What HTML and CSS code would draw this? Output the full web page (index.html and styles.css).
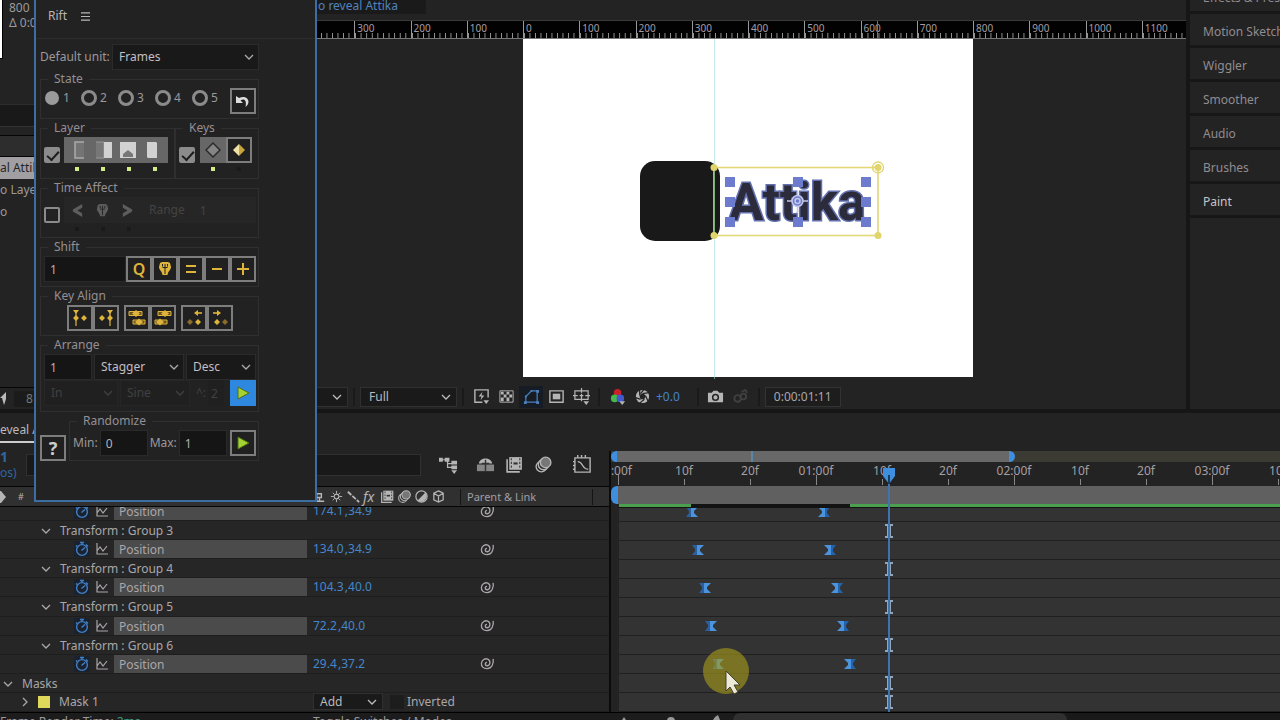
FILE: index.html
```html
<!DOCTYPE html>
<html lang="en">
<head>
<meta charset="UTF-8">
<meta name="viewport" content="width=device-width, initial-scale=1.0">
<title>Logo reveal Attika</title>
<link rel="stylesheet" href="styles.css">
</head>
<body>

<!-- Shared icons -->
<svg class="sprite" aria-hidden="true">
  <symbol id="i-chevron" viewBox="0 0 12 12"><path d="M2 4l4 4 4-4" fill="none" stroke="currentColor" stroke-width="1.3"/></symbol>
  <symbol id="i-right" viewBox="0 0 12 12"><path d="M4 2l4 4-4 4" fill="none" stroke="currentColor" stroke-width="1.3"/></symbol>
  <symbol id="i-watch" viewBox="0 0 16 16"><g fill="none" stroke="currentColor" stroke-width="1.4"><circle cx="8" cy="9" r="5.4"/><path d="M6 1.5h4M8 1.5v2M12 3.5l2 2M3.2 4.4L2 5.6M7.5 9.5L11 6.4"/></g></symbol>
  <symbol id="i-graph" viewBox="0 0 16 16"><path d="M3 2v11h11M3 10l3-4 3 4 4-5" fill="none" stroke="currentColor" stroke-width="1.2"/></symbol>
  <symbol id="i-whip" viewBox="0 0 16 16"><path d="M14 3c1 5-1.500 10.500-6.500 10.500C3.500 13.500 1.200 11 1.500 7.800 1.900 4 5.500 2.200 8.300 3.300c3.200 1.400 3 6.700-.5 7.100C5 10.500 4.800 7 7.500 6.800" fill="none" stroke="currentColor" stroke-width="1.400"/></symbol>
  <symbol id="i-play" viewBox="0 0 16 16"><path d="M3 2v12L14 8z" fill="#a4d233" stroke="#4c6d1a"/></symbol>
  <symbol id="i-shield" viewBox="0 0 16 16"><path d="M3 2l2-1h6l2 1 1 4c0 3-3 4-3.500 8h-5C5 10 2 9 2 6z" fill="currentColor"/><path d="M5.500 3v2.500M8 3v3M10.500 3v2.500M5.500 6.500h5M8 6.500V13" stroke="#222" stroke-width="1" fill="none"/></symbol>
  <symbol id="i-film" viewBox="0 0 18 18"><path d="M4 2h12v12H4z" fill="currentColor"/><path d="M2 4v12h12" fill="none" stroke="currentColor" stroke-width="1.500"/><path d="M6 3v10M14 3v10" stroke="#333" stroke-dasharray="2 1.500" stroke-width="1"/><path d="M8 8h4" stroke="#333" stroke-width="2"/></symbol>
  <symbol id="i-blur" viewBox="0 0 18 18"><g stroke="currentColor" stroke-width="1.300"><circle cx="7" cy="11" r="5" fill="none"/><circle cx="9" cy="9" r="5" fill="#333"/><circle cx="11" cy="7" r="5" fill="#777"/></g></symbol>
  <symbol id="i-key" viewBox="0 0 12 10"><path d="M0 0h6v10H0l3-4V4z" fill="#2b5f9c"/><path d="M5 0h7L8 4v2l4 4H5z" fill="#4b93dc"/></symbol>
  <symbol id="i-keyout" viewBox="0 0 12 10"><path d="M6 0h6L9 4v2l3 4H6z" fill="#2363ab"/><path d="M0 0h7v10H0l4-4V4z" fill="#4b93dc"/></symbol>
  <symbol id="i-beam" viewBox="0 0 8 14"><path d="M0 0h8v2H6v10h2v2H0v-2h2V2H0z" fill="#91a5bd"/></symbol>
</svg>

<main class="workspace">
  <section class="top">

    <!-- Project panel -->
    <aside class="project panel">
      <div class="project-info">
        <div class="thumb"></div>
        <p>800<br>Δ 0:0</p>
      </div>
      <div class="project-search"></div>
      <div class="project-head"></div>
      <ul class="project-list">
        <li class="selected">al Attika</li>
        <li>o Layers</li>
        <li>o</li>
      </ul>
      <div class="project-foot">
        <svg class="rocket" viewBox="0 0 6 14"><path d="M6 0L0 6h2l2 7 2-6z" fill="currentColor"/></svg>
        <span class="bpc">8</span>
      </div>
    </aside>

    <!-- Composition viewer -->
    <section class="viewer panel">
      <div class="viewer-tabs"><a href="#comp">o reveal Attika</a></div>
      <div class="ruler">
        <div class="ruler-track">
          <span></span><span>300</span><span>200</span><span>100</span><span>0</span><span>100</span><span>200</span><span>300</span><span>400</span><span>500</span><span>600</span><span>700</span><span>800</span><span>900</span><span>1000</span><span>1100</span>
        </div>
        <i class="ruler-mark"></i>
      </div>
      <div class="stage" id="comp">
        <svg class="canvas" viewBox="0 0 450 340" role="img" aria-label="Attika logo">
          <rect width="450" height="338" fill="#fff"/>
          <rect x="117" y="122" width="80" height="80" rx="15" fill="#191919"/>
          <path d="M191.500 0v340" stroke="#9fe0da" stroke-opacity=".6"/>
          <text x="206" y="181" class="logo-text">Attika</text>
          <rect x="191" y="128.500" width="164" height="68" fill="none" stroke="#e3d877" stroke-width="1.600"/>
          <path d="M191.500 132v61" stroke="#7fae72"/>
          <g fill="#e0d56c"><circle cx="191" cy="128.500" r="3.500"/><circle cx="191" cy="196.500" r="3.500"/><circle cx="355" cy="196.500" r="3.500"/><circle cx="355" cy="128.500" r="3.500"/></g>
          <circle cx="355" cy="128.500" r="5.500" fill="none" stroke="#e0d56c" stroke-width="1.300"/>
          <path d="M202 138h10v10h-10zM270 138h10v10h-10zM338 138h10v10h-10zM202 158h10v10h-10zM338 158h10v10h-10zM202 178h10v10h-10zM270 178h10v10h-10zM338 178h10v10h-10z" fill="#6c7bce"/>
          <g fill="none" stroke="#c3c8ea" stroke-width="1.500"><circle cx="274.500" cy="162" r="5.500" fill="#6c7bce"/><circle cx="274.500" cy="162" r="2.500"/><path d="M264 162h5M280 162h5M274.500 152v5M274.500 168v5"/></g>
        </svg>
      </div>
      <div class="viewer-bar">
        <button class="combo combo-mag" aria-label="Magnification"><svg class="ico-s"><use href="#i-chevron"/></svg></button>
        <i class="sep"></i>
        <button class="combo combo-res">Full <svg class="ico-s"><use href="#i-chevron"/></svg></button>
        <i class="sep"></i>
        <div class="view-icons">
          <button aria-label="Fast previews"><svg viewBox="0 0 18 18"><path d="M10 15H2V2h14v8" fill="none" stroke="currentColor" stroke-width="1.500"/><path d="M10 4L6 9h3l-1 4 4-5H9z" fill="currentColor"/><path d="M11 13h6l-3 4z" fill="currentColor"/></svg></button>
          <button aria-label="Transparency grid"><svg viewBox="0 0 18 18"><path d="M2 3h14v12H2z" fill="none" stroke="currentColor"/><path d="M3 4h3v3H3zM9 4h3v3H9zM6 7h3v3H6zM12 7h3v3h-3zM3 10h3v4H3zM9 10h3v4H9z" fill="currentColor"/></svg></button>
          <button class="on" aria-label="Mask visibility"><svg viewBox="0 0 18 18"><path d="M3 15V9l6-6h6v12z" fill="none" stroke="currentColor" stroke-width="1.300"/><path d="M1 14h3v3H1zM14 14h3v3h-3zM14 2h3v3h-3zM2 8h2v2H2zM8 2h2v2H8z" fill="currentColor"/></svg></button>
          <button aria-label="Region of interest"><svg viewBox="0 0 18 18"><path d="M2 3h14v12H2z" fill="none" stroke="currentColor" stroke-width="1.500"/><path d="M5 6h8v6H5z" fill="currentColor"/></svg></button>
          <button aria-label="Grid and guides"><svg viewBox="0 0 18 18"><path d="M2 3h14v9H2zM9 0v5M9 10v4M0 8h5M13 8h5M7 8h4M9 6v4" fill="none" stroke="currentColor" stroke-width="1.300"/><path d="M11 14h6l-3 4z" fill="currentColor"/></svg></button>
        </div>
        <i class="sep"></i>
        <div class="view-icons">
          <button aria-label="Channels"><svg viewBox="0 0 18 18"><circle cx="9" cy="5" r="4" fill="#c8202a"/><circle cx="6" cy="11" r="4" fill="#45b84d"/><circle cx="12" cy="11" r="4" fill="#4557cc"/><path d="M11 14h6l-3 4z" fill="currentColor"/></svg></button>
          <button aria-label="Exposure"><svg viewBox="0 0 18 18"><circle cx="9" cy="9" r="7" fill="currentColor"/><path d="M9 6l7-1M12 8l3 6M11 12l-5 4M7 12l-6-2M6 8l0-6M7 6l4-5" stroke="#232323" stroke-width="1.300"/><circle cx="9" cy="9" r="3" fill="#232323"/></svg></button>
        </div>
        <span class="exposure">+0.0</span>
        <i class="sep"></i>
        <div class="view-icons">
          <button aria-label="Snapshot"><svg viewBox="0 0 18 18"><path d="M1 5h4l2-2h4l2 2h4v10H1z" fill="currentColor"/><circle cx="9" cy="10" r="3" fill="none" stroke="#232323" stroke-width="1.600"/></svg></button>
          <button class="off" aria-label="Show snapshot"><svg viewBox="0 0 18 18"><g fill="none" stroke="currentColor" stroke-width="2"><circle cx="6" cy="11" r="3.500"/><circle cx="12" cy="9" r="3"/><path d="M10 4l4-2 2 3"/></g></svg></button>
        </div>
        <i class="sep"></i>
        <button class="timecode">0:00:01:11</button>
      </div>
    </section>

    <!-- Collapsed side panels -->
    <nav class="side">
      <a href="#fx">Effects &amp; Presets</a>
      <a href="#sketch">Motion Sketch</a>
      <a href="#wiggler">Wiggler</a>
      <a href="#smoother">Smoother</a>
      <a href="#audio">Audio</a>
      <a href="#brushes">Brushes</a>
      <a href="#paint" class="current">Paint</a>
    </nav>
  </section>

  <!-- Timeline -->
  <section class="timeline panel">
    <div class="tl-tabs"><a href="#timeline">eveal Attika</a></div>
    <div class="tl-main" id="timeline">
      <div class="tl-left">
        <div class="tl-tools">
          <div class="now"><b>1</b><span>os)</span></div>
          <input class="tl-search" type="text" aria-label="Search layers">
          <div class="tl-icons">
            <button aria-label="Mini flowchart"><svg viewBox="0 0 20 20"><path d="M1 5h8M9 5v8h5M9 9h5" fill="none" stroke="currentColor" stroke-width="1.300"/><path d="M0 3h4v4H0zM6 3h5v4H6zM13 6h6v4h-6zM13 11h6v4h-6zM13 16h6l-3 4z" fill="currentColor"/></svg></button>
            <button aria-label="Shy"><svg viewBox="0 0 20 20"><path d="M1 10h18v7H1z" fill="#858585"/><path d="M3 9c1-7 13-7 14 0z" fill="currentColor"/><path d="M10 5v12M6 9h8" stroke="#333" stroke-width="1.500"/></svg></button>
            <button aria-label="Frame blending"><svg><use href="#i-film"/></svg></button>
            <button aria-label="Motion blur"><svg><use href="#i-blur"/></svg></button>
            <button class="gap" aria-label="Graph editor"><svg viewBox="0 0 20 20"><path d="M2 3h16v15H2zM5 0v3M9 0v3M13 0v3M0 7h2M0 11h2M0 15h2M5 7c6 0 4 8 11 8" fill="none" stroke="currentColor" stroke-width="1.500"/></svg></button>
          </div>
        </div>
        <div class="tl-head">
          <svg class="tag" viewBox="0 0 12 12"><path d="M0 0h1l5 6-5 6H0z" fill="currentColor"/></svg>
          <span class="hash">#</span>
          <div class="switches">
            <svg viewBox="0 0 16 16"><path d="M3 13h10M5 13V5h5v4H5M8 9v4" fill="none" stroke="currentColor" stroke-width="1.500"/></svg>
            <svg viewBox="0 0 16 16"><circle cx="8" cy="8" r="2.500" fill="none" stroke="currentColor" stroke-width="1.200"/><path d="M8 2v3M8 11v3M2 8h3M11 8h3M4 4l2 2M10 10l2 2M12 4l-2 2M6 10l-2 2" stroke="currentColor"/></svg>
            <svg viewBox="0 0 16 16"><path d="M2 3l12 11" stroke="currentColor" stroke-width="2" stroke-dasharray="5 1.500"/></svg>
            <em>fx</em>
            <svg><use href="#i-film"/></svg>
            <svg><use href="#i-blur"/></svg>
            <svg viewBox="0 0 16 16"><circle cx="8" cy="8" r="6" fill="none" stroke="currentColor" stroke-width="1.300"/><path d="M12.200 3.800A6 6 0 0 1 3.800 12.200z" fill="currentColor"/></svg>
            <svg viewBox="0 0 16 16"><path d="M8 2l5 2.500v7L8 14l-5-2.500v-7zM3 4.500L8 7.500l5-3M8 7.500V14" fill="none" stroke="currentColor" stroke-width="1.300"/></svg>
          </div>
          <span class="parent">Parent &amp; Link</span>
        </div>
        <div class="clip">
          <div class="rows props">
            <div class="row prop"><svg class="watch"><use href="#i-watch"/></svg><svg class="graph"><use href="#i-graph"/></svg><span class="name">Position</span><a href="#v" class="value">174.1&hairsp;,34.9</a><svg class="whip"><use href="#i-whip"/></svg></div>
            <div class="row group"><svg class="ico-s"><use href="#i-chevron"/></svg><span>Transform : Group 3</span></div>
            <div class="row prop"><svg class="watch"><use href="#i-watch"/></svg><svg class="graph"><use href="#i-graph"/></svg><span class="name">Position</span><a href="#v" class="value">134.0&hairsp;,34.9</a><svg class="whip"><use href="#i-whip"/></svg></div>
            <div class="row group"><svg class="ico-s"><use href="#i-chevron"/></svg><span>Transform : Group 4</span></div>
            <div class="row prop"><svg class="watch"><use href="#i-watch"/></svg><svg class="graph"><use href="#i-graph"/></svg><span class="name">Position</span><a href="#v" class="value">104.3&hairsp;,40.0</a><svg class="whip"><use href="#i-whip"/></svg></div>
            <div class="row group"><svg class="ico-s"><use href="#i-chevron"/></svg><span>Transform : Group 5</span></div>
            <div class="row prop"><svg class="watch"><use href="#i-watch"/></svg><svg class="graph"><use href="#i-graph"/></svg><span class="name">Position</span><a href="#v" class="value">72.2&hairsp;,40.0</a><svg class="whip"><use href="#i-whip"/></svg></div>
            <div class="row group"><svg class="ico-s"><use href="#i-chevron"/></svg><span>Transform : Group 6</span></div>
            <div class="row prop"><svg class="watch"><use href="#i-watch"/></svg><svg class="graph"><use href="#i-graph"/></svg><span class="name">Position</span><a href="#v" class="value">29.4&hairsp;,37.2</a><svg class="whip"><use href="#i-whip"/></svg></div>
            <div class="row masks"><svg class="ico-s"><use href="#i-chevron"/></svg><span>Masks</span></div>
            <div class="row mask">
              <svg class="ico-s"><use href="#i-right"/></svg><i class="swatch"></i><span class="mask-name">Mask 1</span>
              <button class="combo combo-mode">Add <svg class="ico-s"><use href="#i-chevron"/></svg></button>
              <label class="inverted"><input type="checkbox"> Inverted</label>
            </div>
          </div>
        </div>
      </div>

      <div class="tl-right">
        <div class="navigator"><i class="nav-range"></i></div>
        <div class="time-ruler">
          <span class="sec">0:00f</span><span>10f</span><span>20f</span><span class="sec">01:00f</span><span>10f</span><span>20f</span><span class="sec">02:00f</span><span>10f</span><span>20f</span><span class="sec">03:00f</span><span>10f</span>
        </div>
        <div class="work-area"></div>
        <div class="cache"><i></i><i></i></div>
        <div class="clip">
          <div class="rows tracks">
            <div class="row"><svg class="kf" style="--f:11"><use href="#i-key"/></svg><svg class="kf" style="--f:31"><use href="#i-keyout"/></svg></div>
            <div class="row"><svg class="beam" style="--f:41"><use href="#i-beam"/></svg></div>
            <div class="row"><svg class="kf" style="--f:12"><use href="#i-key"/></svg><svg class="kf" style="--f:32"><use href="#i-keyout"/></svg></div>
            <div class="row"><svg class="beam" style="--f:41"><use href="#i-beam"/></svg></div>
            <div class="row"><svg class="kf" style="--f:13"><use href="#i-key"/></svg><svg class="kf" style="--f:33"><use href="#i-keyout"/></svg></div>
            <div class="row"><svg class="beam" style="--f:41"><use href="#i-beam"/></svg></div>
            <div class="row"><svg class="kf" style="--f:14"><use href="#i-key"/></svg><svg class="kf" style="--f:34"><use href="#i-keyout"/></svg></div>
            <div class="row"><svg class="beam" style="--f:41"><use href="#i-beam"/></svg></div>
            <div class="row"><svg class="kf" style="--f:15"><use href="#i-key"/></svg><svg class="kf" style="--f:35"><use href="#i-keyout"/></svg></div>
            <div class="row"><svg class="beam" style="--f:41"><use href="#i-beam"/></svg></div>
            <div class="row"><svg class="beam" style="--f:41"><use href="#i-beam"/></svg></div>
          </div>
        </div>
        <div class="playhead" style="--f:41"><svg viewBox="0 0 12 16"><path d="M0 0h12v8l-6 8-6-8z" fill="#3e8fe0"/><path d="M6 7v9" stroke="#123" stroke-width="1.500"/></svg></div>
      </div>
    </div>
    <footer class="tl-foot">
      <span class="render">Frame Render Time: <b>2ms</b></span>
      <button class="toggle">Toggle Switches / Modes</button>
      <div class="zoomer"><svg viewBox="0 0 120 8"><path d="M11 7l2-3 2 3zM102 7l2-3 3-2 2 5z" fill="#999"/><circle cx="60" cy="8" r="4" fill="#999"/></svg></div>
      <div class="scroller"><i></i></div>
    </footer>
  </section>
</main>

<!-- Floating Rift window -->
<section class="rift">
  <header class="rift-title"><h3>Rift</h3><button aria-label="Panel menu"><svg viewBox="0 0 10 10"><path d="M0 1h10M0 5h10M0 9h10" stroke="currentColor" stroke-width="1.300"/></svg></button></header>
  <form class="rift-body">
    <div class="unit">
      <label for="unit">Default unit:</label>
      <span class="select"><select id="unit"><option>Frames</option></select><svg class="ico-s"><use href="#i-chevron"/></svg></span>
    </div>

    <fieldset>
      <legend>State</legend>
      <div class="line state">
        <label><input type="radio" name="state" checked>1</label>
        <label><input type="radio" name="state">2</label>
        <label><input type="radio" name="state">3</label>
        <label><input type="radio" name="state">4</label>
        <label><input type="radio" name="state">5</label>
        <button type="button" class="btn end" aria-label="Reset"><svg viewBox="0 0 16 16"><path d="M1 3v7h7L5.500 7.500C9 5 12 7 10.500 14 17 9 12 1 4 5z" fill="#ddd"/></svg></button>
      </div>
    </fieldset>

    <div class="pair">
      <fieldset class="layer">
        <legend>Layer</legend>
        <div class="line top-line">
          <input type="checkbox" aria-label="Layer" checked>
          <div class="stack">
            <div class="strip">
              <svg viewBox="0 0 18 18"><path d="M14 1H5v16h9" fill="#747474" stroke="#aaa" stroke-width="1.500"/></svg>
              <svg viewBox="0 0 18 18"><path d="M1 1h8v16H1" fill="#777" stroke="#999"/><path d="M9 1h8v16H9z" fill="#d2d2d2"/></svg>
              <svg viewBox="0 0 18 18"><path d="M1 1h16v16H1z" fill="#d2d2d2"/><path d="M4 16v-3l5-4 5 4v3z" fill="#777"/></svg>
              <svg viewBox="0 0 18 18"><path d="M3 1h9l1 1v15H4l-1-1z" fill="#d2d2d2"/></svg>
            </div>
            <div class="dots"><i></i><i></i><i></i><i></i></div>
          </div>
        </div>
      </fieldset>
      <fieldset class="keys">
        <legend>Keys</legend>
        <div class="line top-line">
          <input type="checkbox" aria-label="Keys" checked>
          <div class="stack">
            <div class="line">
              <button type="button" class="btn lit" aria-label="All keys"><svg viewBox="0 0 16 16"><path d="M8 1l7 7-7 7-7-7z" fill="#858585" stroke="#2c2c2c" stroke-width="1.500"/></svg></button>
              <button type="button" class="btn" aria-label="Selected keys"><svg viewBox="0 0 16 16"><path d="M8 2v12L2 8z" fill="#efe2a4"/><path d="M8 2l6 6-6 6z" fill="#c9a63c"/></svg></button>
            </div>
            <div class="dots"><i></i><i class="dim"></i></div>
          </div>
        </div>
      </fieldset>
    </div>

    <fieldset class="time">
      <legend>Time Affect</legend>
      <div class="line top-line">
        <input type="checkbox" aria-label="Time Affect">
        <div class="stack wide">
          <div class="range">
            <svg viewBox="0 0 16 16"><path d="M13 1v4L8 8l5 3v4L3 9V7z" fill="currentColor"/></svg>
            <svg><use href="#i-shield"/></svg>
            <svg viewBox="0 0 16 16"><path d="M3 1v4l5 3-5 3v4l10-6V7z" fill="currentColor"/></svg>
            <label for="range">Range</label>
            <input id="range" type="text" value="1" disabled>
          </div>
          <div class="dots"><i class="dim"></i><i class="dim"></i><i class="dim"></i></div>
        </div>
      </div>
    </fieldset>

    <fieldset>
      <legend>Shift</legend>
      <div class="line">
        <input class="grow" type="text" value="1" aria-label="Shift amount">
        <button type="button" class="btn gold">Q</button>
        <button type="button" class="btn gold" aria-label="To playhead"><svg><use href="#i-shield"/></svg></button>
        <button type="button" class="btn gold" aria-label="Equal"><svg viewBox="0 0 16 16"><path d="M3 5h10M3 11h10" stroke="currentColor" stroke-width="2"/></svg></button>
        <button type="button" class="btn gold" aria-label="Minus"><svg viewBox="0 0 16 16"><path d="M3 8h10" stroke="currentColor" stroke-width="2"/></svg></button>
        <button type="button" class="btn gold" aria-label="Plus"><svg viewBox="0 0 16 16"><path d="M2 8h12M8 2v12" stroke="currentColor" stroke-width="2"/></svg></button>
      </div>
    </fieldset>

    <fieldset>
      <legend>Key Align</legend>
      <div class="line align">
        <div class="line">
          <button type="button" class="btn gold" aria-label="Align left"><svg viewBox="0 0 18 18"><path d="M2 1h6L5 5zM5 6l3 3-3 3-3-3zM13 6l3 3-3 3-3-3z" fill="currentColor"/><path d="M5 3v14" stroke="currentColor" stroke-width="1.200"/></svg></button>
          <button type="button" class="btn gold" aria-label="Align right"><svg viewBox="0 0 18 18"><path d="M10 1h6l-3 4zM5 6l3 3-3 3-3-3zM13 6l3 3-3 3-3-3z" fill="currentColor"/><path d="M13 3v14" stroke="currentColor" stroke-width="1.200"/></svg></button>
        </div>
        <div class="line">
          <button type="button" class="btn gold" aria-label="Layer in"><svg viewBox="0 0 18 18"><path d="M1 2.500h13v4H1zM5 11h12v4H5z" fill="#6b5520" stroke="currentColor"/><path d="M8 1l4 3.500L8 8 4 4.500zM11 9.500l4 3.500-4 3.500L7 13z" fill="currentColor"/></svg></button>
          <button type="button" class="btn gold" aria-label="Layer out"><svg viewBox="0 0 18 18"><path d="M4 2.500h13v4H4zM1 11h12v4H1z" fill="#6b5520" stroke="currentColor"/><path d="M11 1l4 3.500L11 8 7 4.500zM6 9.500l4 3.500-4 3.500L2 13z" fill="currentColor"/></svg></button>
        </div>
        <div class="line">
          <button type="button" class="btn gold" aria-label="To left"><svg viewBox="0 0 18 18"><path d="M5 10l3 3-3 3-3-3z" fill="#8b6c2a"/><path d="M13 10l3 3-3 3-3-3zM9 4l4-3v6z" fill="currentColor"/><path d="M12 4h5" stroke="currentColor" stroke-width="1.600"/></svg></button>
          <button type="button" class="btn gold" aria-label="To right"><svg viewBox="0 0 18 18"><path d="M14 10l3 3-3 3-3-3z" fill="#8b6c2a"/><path d="M6 10l3 3-3 3-3-3zM10 4L6 1v6z" fill="currentColor"/><path d="M2 4h5" stroke="currentColor" stroke-width="1.600"/></svg></button>
        </div>
      </div>
    </fieldset>

    <fieldset class="arrange">
      <legend>Arrange</legend>
      <div class="line spaced">
        <input class="num" type="text" value="1" aria-label="Arrange amount">
        <span class="select grow"><select aria-label="Arrange mode"><option>Stagger</option></select><svg class="ico-s"><use href="#i-chevron"/></svg></span>
        <span class="select sel-order"><select aria-label="Order"><option>Desc</option></select><svg class="ico-s"><use href="#i-chevron"/></svg></span>
      </div>
      <div class="line spaced">
        <span class="select sel-ease off"><select aria-label="Ease" disabled><option>In</option></select><svg class="ico-s"><use href="#i-chevron"/></svg></span>
        <span class="select sel-curve off"><select aria-label="Curve" disabled><option>Sine</option></select><svg class="ico-s"><use href="#i-chevron"/></svg></span>
        <label class="off power" for="power">^:</label>
        <input class="tiny" id="power" type="text" value="2" disabled>
        <button type="button" class="btn active end" aria-label="Arrange"><svg><use href="#i-play"/></svg></button>
      </div>
    </fieldset>

    <div class="bottom">
      <button type="button" class="btn help">?</button>
      <fieldset class="random">
        <legend>Randomize</legend>
        <div class="line">
          <label for="min">Min:</label><input class="num" id="min" type="text" value="0">
          <label for="max">Max:</label><input class="num" id="max" type="text" value="1">
          <button type="button" class="btn end" aria-label="Randomize"><svg><use href="#i-play"/></svg></button>
        </div>
      </fieldset>
    </div>
  </form>
</section>

<!-- Mouse pointer with click highlight -->
<div class="pointer">
  <svg viewBox="0 0 46 46"><circle cx="23" cy="23" r="23" fill="#a49b1a" fill-opacity=".62"/><path d="M23 23v20l4-4 4 7 4-2-4-7h6z" fill="#eeeada" stroke="#44422a"/></svg>
</div>

</body>
</html>
```
FILE: styles.css
```css
* {
  box-sizing: border-box;
}
body {
  margin: 0;
  height: 100vh;
  overflow: hidden;
  position: relative;
  background: #161616;
  color: #9c989c;
  font-family: "Noto Sans", "Open Sans", sans-serif;
  font-size: 12px;
  line-height: 16px;
}
button, input, select {
  font: inherit;
  color: inherit;
  background: none;
  border: 0;
  margin: 0;
  padding: 0;
  min-width: 0;
}
select:disabled, input:disabled {
  opacity: 1;
}
a {
  color: inherit;
  text-decoration: none;
}
svg {
  display: block;
  flex: none;
}
h3, p, ul {
  margin: 0;
  padding: 0;
}
.sprite {
  position: absolute;
  width: 0;
  height: 0;
}
.ico-s {
  width: 12px;
  height: 12px;
}
.panel {
  background: #232323;
}
.workspace {
  display: grid;
  grid-template-rows: 409px 1fr;
  gap: 4px;
  height: 100%;
}
.top {
  display: grid;
  grid-template-columns: 306px 1fr 90px;
  gap: 4px;
  min-height: 0;
}

/* Project panel */
.project {
  display: flex;
  flex-direction: column;
  overflow: hidden;
}
.project-info {
  display: flex;
  gap: 6px;
  height: 105px;
  border-bottom: 1px solid #2e2e2e;
}
.project-info p {
  line-height: 15px;
}
.thumb {
  width: 3px;
  height: 59px;
  background: #fff;
  border: solid #000;
  border-width: 0 1px 1px 0;
}
.project-search {
  height: 22px;
  background: #191919;
  border-bottom: 1px solid #333;
}
.project-head {
  height: 22px;
  margin-top: 8px;
  background: #2d2d2d;
  border: solid #050505;
  border-width: 1px 0;
}
.project-list {
  flex: 1;
  list-style: none;
}
.project-list li {
  height: 22px;
  padding: 3px 0;
}
.project-list .selected {
  background: #a29fa3;
  color: #262626;
}
.project-foot {
  display: flex;
  align-items: center;
  gap: 8px;
  height: 22px;
  border-top: 1px solid #060606;
  color: #bbb;
}
.rocket {
  width: 6px;
  height: 14px;
}
.bpc {
  background: #1b1b1b;
  padding: 0 12px;
  color: #777;
}

/* Composition viewer */
.viewer {
  display: flex;
  flex-direction: column;
  overflow: hidden;
  min-width: 0;
}
.viewer-tabs {
  height: 20px;
  line-height: 12px;
}
.viewer-tabs a {
  display: block;
  width: 116px;
  height: 14px;
  padding-left: 8px;
  background: #1a1a1a;
  color: #5183bd;
}
.ruler {
  position: relative;
  display: flex;
  justify-content: center;
  overflow: hidden;
  height: 19px;
  background: #020202;
  border-top: 1px solid #3a3a3a;
  border-bottom: 1px solid #777;
  color: #a59da3;
  font-size: 10px;
  line-height: 14px;
}
.ruler-track {
  flex: none;
  width: 900px;
  display: grid;
  grid-template-columns: repeat(16, 1fr);
}
.ruler-track span {
  padding-left: 2px;
  border-left: 1px solid #999;
  background: linear-gradient(90deg, #999 1px, transparent 1px) 0 100% / 10% 5px repeat-x;
}
.ruler-mark {
  position: absolute;
  left: 567px;
  top: 0;
  width: 1px;
  height: 100%;
  background: #3f7fc8;
}
.stage {
  flex: 1;
  display: flex;
  justify-content: center;
}
.canvas {
  width: 450px;
  height: 340px;
}
.logo-text {
  font: 700 51px Roboto, sans-serif;
  fill: #2b2b3c;
  stroke: #6270ad;
  stroke-width: 3px;
  paint-order: stroke;
}
.viewer-bar {
  display: flex;
  align-items: center;
  gap: 5px;
  height: 25px;
  flex: none;
  color: #b5b5b5;
}
.combo {
  display: flex;
  align-items: center;
  justify-content: space-between;
  height: 20px;
  padding: 0 4px 0 8px;
  background: #1a1a1a;
  border: 1px solid #303030;
  color: #bdb9bd;
}
.combo-mag {
  width: 38px;
  justify-content: flex-end;
}
.combo-res {
  width: 97px;
}
.sep {
  width: 2px;
  height: 18px;
  background: #1a1a1a;
}
.view-icons {
  display: flex;
  gap: 1px;
}
.view-icons button {
  display: grid;
  place-items: center;
  width: 24px;
  height: 22px;
}
.view-icons svg {
  width: 17px;
  height: 17px;
}
.view-icons .on {
  background: #161b24;
  color: #4a80bf;
}
.view-icons .off {
  color: #444;
}
.exposure {
  color: #4583c8;
  padding-right: 12px;
  margin-left: -3px;
}
.timecode {
  height: 20px;
  padding: 0 8px;
  border: 1px solid #333;
  background: #1d1d1d;
  color: #aaa6aa;
}

/* Side panels */
.side {
  display: flex;
  flex-direction: column;
  overflow: hidden;
  background: #232323;
  margin-top: -20px;
  white-space: nowrap;
}
.side a {
  flex: none;
  height: 34px;
  padding: 10px 13px 6px;
  border-bottom: 3px solid #171717;
  color: #918c90;
}
.side .current {
  color: #c8c3c6;
}

/* Timeline */
.timeline {
  display: flex;
  flex-direction: column;
  min-height: 0;
}
.tl-tabs {
  height: 38px;
  padding-top: 9px;
}
.tl-tabs a {
  display: inline-block;
  height: 21px;
  border-bottom: 2px solid #ccc;
  color: #bdb9bd;
}
.tl-main {
  flex: 1;
  min-height: 0;
  display: grid;
  grid-template-columns: 611px 1fr;
}
.tl-left, .tl-right {
  display: flex;
  flex-direction: column;
  min-height: 0;
  min-width: 0;
}
.tl-left {
  border-right: 2px solid #0b0b0b;
}
.tl-tools {
  display: flex;
  align-items: center;
  height: 35px;
  padding-bottom: 8px;
  gap: 6px;
}
.now {
  width: 20px;
  color: #2d66a5;
  line-height: 16px;
}
.now b {
  display: block;
  font-size: 14px;
}
.tl-search {
  width: 395px;
  height: 22px;
  background: #191919;
  border: 1px solid #303030;
}
.tl-icons {
  display: flex;
  gap: 10px;
  margin-left: 12px;
  color: #b5b5b5;
}
.tl-icons svg {
  width: 19px;
  height: 19px;
}
.tl-icons button:first-child {
  margin-right: 8px;
}
.tl-icons .gap {
  margin-left: 10px;
}
.tl-head {
  display: flex;
  align-items: center;
  height: 21px;
  background: #303030;
  border-top: 1px solid #050505;
  border-bottom: 1px solid #050505;
  color: #b5b5b5;
  font-size: 11px;
}
.tag {
  width: 12px;
  height: 12px;
}
.hash {
  width: 300px;
  padding-left: 6px;
  font-size: 9px;
}
.switches {
  display: flex;
  align-items: center;
  gap: 2px;
  width: 148px;
}
.switches svg {
  width: 15px;
  height: 15px;
}
.switches em {
  width: 15px;
  font-size: 14px;
}
.parent {
  width: 133px;
  padding-left: 6px;
  border: solid #151515;
  border-width: 0 1px;
  color: #a29ea2;
}
.clip {
  flex: 1;
  min-height: 0;
  overflow: hidden;
}
/* first row is scrolled partly under the header */
.rows {
  display: grid;
  grid-template-rows: repeat(11, 1fr);
  height: calc(100% + 5px);
  margin-top: -5px;
}
.row {
  display: flex;
  align-items: center;
  min-height: 0;
}
.props .row {
  border-bottom: 1px solid #1e1e1e;
  background: #262626;
  color: #aaa6aa;
}
.props .group {
  padding: 2px 0 0 40px;
  gap: 8px;
}
.props .prop {
  padding-left: 74px;
}
.watch {
  width: 16px;
  height: 16px;
  color: #4280c4;
  background: #1a2230;
}
.graph {
  width: 16px;
  height: 16px;
  margin: 0 4px;
}
.name {
  width: 193px;
  height: 18px;
  padding-left: 5px;
  line-height: 20px;
  background: #4b4b4b;
  margin-right: 6px;
}
.value {
  width: 167px;
  color: #4486cc;
}
.whip {
  width: 15px;
  height: 15px;
}
.props .masks {
  padding: 2px 0 0 2px;
  gap: 8px;
}
.mask {
  padding-left: 19px;
}
.swatch {
  width: 12px;
  height: 12px;
  margin: 0 9px 0 7px;
  background: #e0d85a;
}
.mask-name {
  width: 254px;
}
.combo-mode {
  width: 70px;
  height: 17px;
  padding-left: 6px;
}
.inverted {
  display: flex;
  align-items: center;
  gap: 3px;
  margin-left: 7px;
}
.inverted input {
  appearance: none;
  width: 14px;
  height: 14px;
  background: #1d1d1d;
}

/* Time side */
.tl-right {
  position: relative;
  isolation: isolate;
  overflow: hidden;
  background: #232323;
}
.navigator {
  height: 11px;
  background: #3b3a33;
}
.nav-range {
  display: block;
  width: 404px;
  height: 11px;
  border: solid #3e8fe0;
  border-width: 0 6px;
  border-radius: 6px;
  background: linear-gradient(90deg, transparent 134px, #5a86a8 134px, #5a86a8 136px, transparent 136px) #686868;
}
.time-ruler {
  display: flex;
  height: 23px;
  margin-left: -26px;
  flex: none;
  color: #a39fa3;
  padding-top: 1px;
}
.time-ruler span {
  flex: none;
  width: 66px;
  text-align: center;
  background: linear-gradient(#888, #888) 50% 100% / 1px 6px no-repeat;
}
.time-ruler .sec {
  background-size: 1px 10px;
}
.work-area {
  height: 18px;
  margin-top: 1px;
  flex: none;
  background: #606060;
  border-left: 7px solid #3e8fe0;
  border-radius: 6px 0 0 6px;
}
.cache {
  display: flex;
  justify-content: space-between;
  flex: none;
  height: 4px;
  margin-left: 8px;
  background: #131313;
}
.cache i {
  height: 3px;
  background: #4aa04f;
  width: 72px;
}
.cache i:last-child {
  width: calc(100% - 231px);
}
.tracks {
  margin-left: 8px;
}
.tracks .row {
  position: relative;
  background: #333;
  border-bottom: 1px solid #202020;
}
.kf, .beam {
  position: absolute;
  left: calc(var(--f) * 66px / 10 - 6px);
  width: 12px;
  height: 10px;
}
.beam {
  left: calc(var(--f) * 66px / 10 - 5px);
  width: 8px;
  height: 14px;
}
.playhead {
  position: absolute;
  left: calc(var(--f) * 66px / 10 + 6px);
  top: 17px;
  bottom: 0;
  width: 2px;
  background: #3f73ad;
}
.playhead svg {
  width: 12px;
  height: 16px;
  margin-left: -5px;
}
.tl-foot {
  display: flex;
  height: 8px;
  overflow: hidden;
  border-top: 1px solid #000;
  background: #1c1c1c;
  white-space: nowrap;
  line-height: 17px;
}
.render {
  width: 313px;
}
.render b {
  font-weight: 400;
  color: #3c9a80;
}
.toggle {
  width: 298px;
  text-align: left;
  height: 17px;
}
.zoomer {
  width: 122px;
}
.zoomer svg {
  width: 120px;
  height: 8px;
}
.scroller {
  flex: 1;
  background: #191919;
}
.scroller i {
  display: block;
  width: 61%;
  height: 14px;
  border-radius: 7px;
  background: #303030;
}

/* Rift window */
.rift {
  position: absolute;
  left: 34px;
  top: 0;
  width: 283px;
  height: 502px;
  background: #222;
  border: 2px solid #3d6ea3;
  border-top: 0;
}
.rift-title {
  display: flex;
  align-items: center;
  gap: 14px;
  height: 39px;
  padding: 0 12px 6px;
  border-bottom: 1px solid #2d2d2d;
  color: #b9b5b9;
}
.rift-title h3 {
  font-size: 12px;
  font-weight: 400;
}
.rift-title svg {
  width: 9px;
  height: 9px;
}
.rift-body {
  width: 223px;
  padding: 4px 0 0 4px;
  display: flex;
  flex-direction: column;
  gap: 1px;
}
.unit, .pair, .bottom, .line {
  display: flex;
}
.unit {
  align-items: center;
  justify-content: space-between;
  height: 27px;
}
.select {
  position: relative;
  display: block;
  height: 26px;
  background: #191919;
  border: 1px solid #2b2b2b;
  color: #c3bfc3;
}
.select select {
  appearance: none;
  width: 100%;
  height: 100%;
  padding-left: 6px;
}
.select svg {
  position: absolute;
  right: 3px;
  top: 6px;
  pointer-events: none;
  color: #aaa;
}
.unit .select {
  width: 147px;
}
fieldset {
  min-width: 0;
  margin: 0;
  padding: 1px 2px 2px 3px;
  border: 1px solid #2f2f2f;
  height: 48px;
}
legend {
  margin-left: 4px;
  padding: 0 6px;
  color: #958f95;
}
.line {
  align-items: center;
}
.end {
  margin-left: auto;
}
.grow {
  flex: 1;
}
.state label {
  display: flex;
  align-items: center;
  gap: 3px;
  width: 37px;
  height: 20px;
  align-self: flex-start;
}
input[type="radio"] {
  appearance: none;
  width: 16px;
  height: 16px;
  border: 3px solid #8b8b8b;
  border-radius: 50%;
}
input[type="radio"]:checked {
  background: #9a9a9a;
  border-color: #9a9a9a;
  width: 14px;
  height: 14px;
  margin: 0 1px;
}
input[type="checkbox"] {
  appearance: none;
  flex: none;
}
.rift input[type="checkbox"] {
  width: 16px;
  height: 16px;
  margin-top: 10px;
  border: 2px solid #8b8b8b;
  border-radius: 2px;
}
.rift input[type="checkbox"]:checked {
  background: #8b8b8b;
}
.rift input[type="checkbox"]:checked::before {
  content: "";
  display: block;
  width: 10px;
  height: 5px;
  margin: 2px 1px;
  border: solid #1c1c1c;
  border-width: 0 0 2px 2px;
  transform: rotate(-48deg);
}
.btn {
  display: grid;
  place-items: center;
  flex: none;
  width: 26px;
  height: 26px;
  border: 2px solid #7d7d7d;
  background: #202020;
}
.btn svg {
  width: 16px;
  height: 16px;
}
.gold {
  color: #dfb43c;
  font-size: 16px;
  font-weight: 600;
}
.lit {
  background: #676767;
  border-color: #676767;
}
.active {
  background: #2f88df;
  border-color: #2f88df;
}
.rift input[type="text"] {
  height: 26px;
  padding-left: 5px;
  background: #151515;
  border: 1px solid #2a2a2a;
  color: #b5b1b5;
}
.layer {
  flex: 1;
  height: 59px;
}
.keys {
  width: 84px;
  height: 59px;
}
.top-line {
  align-items: flex-start;
  gap: 4px;
}
.keys .top-line {
  gap: 5px;
}
.strip {
  display: flex;
  align-items: center;
  justify-content: space-between;
  width: 104px;
  height: 26px;
  padding: 0 6px;
  background: #676767;
}
.strip svg {
  width: 18px;
  height: 18px;
}
.dots {
  display: flex;
  justify-content: space-around;
}
.dots i {
  width: 4px;
  height: 4px;
  margin-top: 4px;
  background: #d0ee82;
}
.dots .dim {
  background: #1a1a1a;
}
.time {
  height: 58px;
}
.wide {
  flex: 1;
}
.time .dots {
  width: 78px;
}
.range {
  display: flex;
  align-items: center;
  gap: 10px;
  height: 26px;
  padding-left: 6px;
  background: #262626;
  color: #5d5d5d;
}
.range svg {
  width: 15px;
  height: 15px;
}
.range label {
  margin-left: 4px;
  color: #444;
}
.rift .range input {
  width: 40px;
  background: none;
  border: 0;
  color: #444;
}
.align {
  justify-content: center;
  gap: 5px;
}
.align svg {
  width: 18px;
  height: 18px;
}
.arrange {
  height: 75px;
}
.spaced {
  gap: 2px;
}
.rift .num {
  width: 48px;
}
.sel-order {
  width: 70px;
}
.sel-ease {
  width: 74px;
}
.sel-curve {
  width: 70px;
}
.off, .off svg {
  color: #404040;
}
.select.off {
  background: #202020;
  border-color: #262626;
}
.power {
  padding-left: 4px;
}
.rift input.tiny {
  width: 16px;
  padding-left: 3px;
  background: #202020;
  border: 0;
  color: #404040;
}
.bottom {
  align-items: flex-end;
}
.help {
  font-size: 18px;
  font-weight: 700;
  color: #ccc;
}
.random {
  flex: 1;
  margin-left: 3px;
}
.random .line {
  gap: 2px;
}

.pointer {
  position: absolute;
  left: 703px;
  top: 648px;
  pointer-events: none;
}
.pointer svg {
  width: 46px;
  height: 46px;
  overflow: visible;
}
```
